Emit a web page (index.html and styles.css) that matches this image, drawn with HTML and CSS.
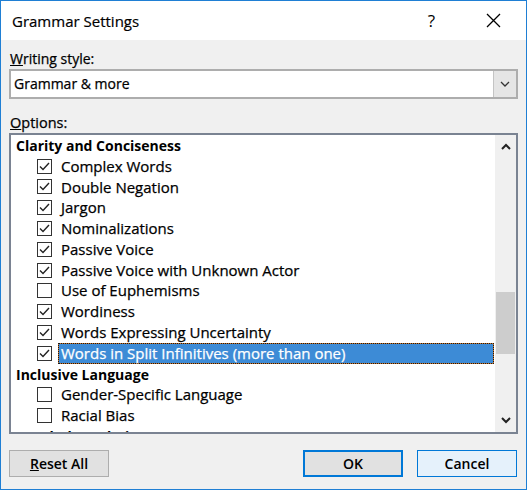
FILE: index.html
```html
<!DOCTYPE html>
<html lang="en">
  <head>
    <meta charset="UTF-8" />
    <title>Grammar Settings</title>
    <link rel="stylesheet" href="styles.css">
  </head>
  <body>
    <div class="dialog">
      <div class="title-bar">
        <span class="title">Grammar Settings</span>
        <span class="help">?</span>
        <svg class="close" width="15" height="15" viewBox="0 0 15 15">
          <path d="M1 1 L14 14 M14 1 L1 14" stroke="#000" stroke-width="1.3" fill="none" />
        </svg>
      </div>

      <div class="content">
        <div class="label"><u>W</u>riting style:</div>
        <div class="combo">
          <span class="combo-text">Grammar &amp; more</span>
          <span class="combo-btn">
            <svg width="10" height="6" viewBox="0 0 10 6">
              <path d="M1 1 L5 5 L9 1" stroke="#333" stroke-width="1.3" fill="none" />
            </svg>
          </span>
        </div>

        <div class="label options-label"><u>O</u>ptions:</div>
        <div class="listbox">
          <div class="list">
            <div class="row group">Clarity and Conciseness</div>
            <div class="row"><span class="check on"></span><span class="text">Complex Words</span></div>
            <div class="row"><span class="check on"></span><span class="text">Double Negation</span></div>
            <div class="row"><span class="check on"></span><span class="text">Jargon</span></div>
            <div class="row"><span class="check on"></span><span class="text">Nominalizations</span></div>
            <div class="row"><span class="check on"></span><span class="text">Passive Voice</span></div>
            <div class="row"><span class="check on"></span><span class="text">Passive Voice with Unknown Actor</span></div>
            <div class="row"><span class="check"></span><span class="text">Use of Euphemisms</span></div>
            <div class="row"><span class="check on"></span><span class="text">Wordiness</span></div>
            <div class="row"><span class="check on"></span><span class="text">Words Expressing Uncertainty</span></div>
            <div class="row"><span class="check on"></span><span class="text selected">Words in Split Infinitives (more than one)</span></div>
            <div class="row group">Inclusive Language</div>
            <div class="row"><span class="check"></span><span class="text">Gender-Specific Language</span></div>
            <div class="row"><span class="check"></span><span class="text">Racial Bias</span></div>
            <div class="row group">Vocabulary Choice</div>
          </div>
          <div class="scrollbar">
            <svg class="arrow" width="10" height="7" viewBox="0 0 10 7">
              <path d="M1 6 L5 2 L9 6" stroke="#222" stroke-width="2" fill="none" />
            </svg>
            <div class="track">
              <div class="thumb"></div>
            </div>
            <svg class="arrow" width="10" height="7" viewBox="0 0 10 7">
              <path d="M1 1 L5 5 L9 1" stroke="#222" stroke-width="2" fill="none" />
            </svg>
          </div>
        </div>

        <div class="buttons">
          <button class="btn"><u>R</u>eset All</button>
          <span class="spacer"></span>
          <button class="btn default">OK</button>
          <button class="btn hover">Cancel</button>
        </div>
      </div>
    </div>
  </body>
</html>
```

FILE: styles.css
```css
body {
  margin: 0;
  background: #fff;
  font-family: "Open Sans", "Noto Sans", sans-serif;
  font-size: 14px;
  color: #000;
}

.dialog {
  width: 527px;
  height: 490px;
  box-sizing: border-box;
  border: 1px solid #1f7fd4;
  display: flex;
  flex-direction: column;
}

.title-bar {
  height: 39px;
  background: #fff;
  display: flex;
  align-items: center;
  padding-left: 11px;
}

.title {
  font-size: 15px;
  -webkit-text-stroke: 0.2px #000;
  flex: 1;
}

.help {
  font-size: 17px;
  margin-right: 51px;
}

.close {
  margin-right: 25px;
}

.content {
  flex: 1;
  background: #f0f0f0;
  padding: 9px 8px 0 8px;
  -webkit-text-stroke: 0.25px #000;
}

.label {
  height: 20px;
  line-height: 20px;
  padding-left: 1px;
}

.options-label {
  margin-top: 14px;
  font-size: 14.5px;
}

.combo {
  height: 30px;
  box-sizing: border-box;
  border: 2px solid #adadad;
  background: #fff;
  display: flex;
  align-items: stretch;
}

.combo-text {
  flex: 1;
  line-height: 26px;
  padding-left: 3px;
}

.combo-btn {
  width: 22px;
  background: #e5e5e5;
  border-left: 1px solid #c4c4c4;
  display: flex;
  align-items: center;
  justify-content: center;
}

.listbox {
  height: 301px;
  box-sizing: border-box;
  border: 2px solid #7a8392;
  background: #fff;
  display: flex;
}

.list {
  flex: 1;
  overflow: hidden;
  padding-left: 5px;
}

.row {
  height: 20.8px;
  display: flex;
  align-items: center;
  white-space: nowrap;
  font-size: 15px;
}

.group {
  font-weight: bold;
  font-size: 14px;
  -webkit-text-stroke: 0;
}

.check {
  width: 15px;
  height: 15px;
  box-sizing: border-box;
  border: 1px solid #333;
  background: #fff;
  margin-left: 21px;
  margin-right: 9px;
  flex: none;
}

.check.on {
  background: #fff url("data:image/svg+xml,%3Csvg xmlns='http://www.w3.org/2000/svg' width='13' height='13' viewBox='0 0 13 13'%3E%3Cpath d='M2 6.5 L5 9.5 L11 3' stroke='%23222' stroke-width='1.4' fill='none'/%3E%3C/svg%3E") center no-repeat;
}

.text {
  padding: 0 2px;
  line-height: 19px;
  border: 1px solid transparent;
  margin-left: -3px;
}

.text.selected {
  flex: 1;
  color: #fff;
  -webkit-text-stroke: 0.25px #fff;
  border: 1px dotted #1a1a1a;
  background: linear-gradient(#3d8bd6, #3d8bd6) padding-box, #c8742a border-box;
  margin-right: 1px;
}

.scrollbar {
  width: 21px;
  background: #f0f0f0;
  display: flex;
  flex-direction: column;
  align-items: center;
}

.arrow {
  margin: 8px 0;
  flex: none;
}

.track {
  flex: 1;
  width: 100%;
  padding: 0 1px;
  box-sizing: border-box;
}

.thumb {
  height: 62px;
  margin-top: 134px;
  background: #cdcdcd;
}

.buttons {
  display: flex;
  gap: 14px;
  margin-top: 16px;
  padding-right: 1px;
}

.spacer {
  flex: 1;
}

.btn {
  width: 100px;
  height: 27px;
  font-family: inherit;
  font-size: 14px;
  font-weight: 600;
  -webkit-text-stroke: 0;
  color: #000;
  background: #e1e1e1;
  border: 1px solid #adadad;
  padding: 0;
}

.btn.default {
  border: 2px solid #0078d7;
}

.btn.hover {
  background: #e5f1fb;
  border: 1px solid #0078d7;
}
```
